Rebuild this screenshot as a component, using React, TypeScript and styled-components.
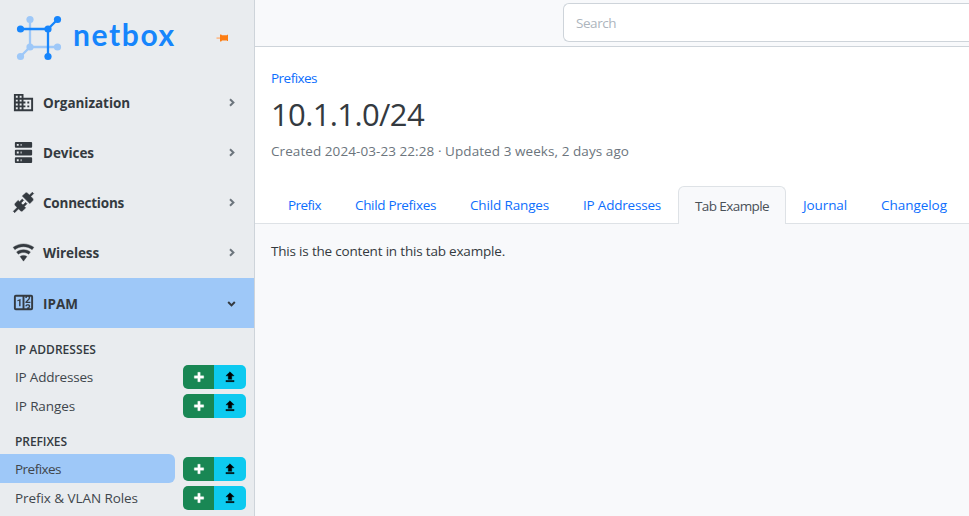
import React from "react";
import styled, { createGlobalStyle } from "styled-components";

const GlobalStyle = createGlobalStyle`
  * { box-sizing: border-box; }
  body {
    margin: 0;
    overflow: hidden;
    background: #f8f9fb;
    color: #343a40;
    font: 400 13.5px/20px "Open Sans", "Noto Sans", sans-serif;
  }
`;

const Page = styled.div`
  display: flex;
  height: 516px;
`;

const Sidebar = styled.aside`
  width: 255px;
  flex: none;
  background: #e9ecef;
  border-right: 1px solid #ced4da;
  overflow: hidden;
`;

const Brand = styled.div`
  height: 78px;
  padding: 12px 25px 0 14px;
  display: flex;
  align-items: flex-start;
`;

const BrandMark = styled.svg`
  width: 50px;
  height: 50px;
  flex: none;
`;

const BrandName = styled.span`
  flex: 1;
  margin: 2px 0 0 9px;
  color: #1685fc;
  font: 700 30px/40px Lato, sans-serif;
  letter-spacing: 1.6px;
`;

const Pin = styled.svg`
  width: 13px;
  height: 8px;
  margin-top: 22px;
`;

const NavItem = styled.a<{ $active?: boolean }>`
  display: flex;
  align-items: center;
  height: 50px;
  padding: 0 16px 0 12px;
  font-weight: 700;
  color: #343a40;
  background: ${(p) => (p.$active ? "#9ec8f8" : "transparent")};
`;

const NavIcon = styled.svg<{ $weight?: number }>`
  width: 23px;
  height: 23px;
  margin: -1px 8px 0 0;
  fill: #343a40;
  stroke: #343a40;
  stroke-width: ${(p) => p.$weight ?? 0};
`;

const Label = styled.span<{ $track?: number }>`
  white-space: nowrap;
  letter-spacing: ${(p) => p.$track ?? 0}px;
`;

const NavLabel = styled(Label)<{ $active?: boolean }>`
  flex: 1;
  margin-top: ${(p) => (p.$active ? 1 : -1)}px;
`;

const Chevron = styled.svg<{ $open?: boolean }>`
  width: 11px;
  height: 11px;
  margin: ${(p) => (p.$open ? "1px" : "-2px")} 1px 0 0;
  fill: none;
  stroke: ${(p) => (p.$open ? "#343a40" : "#6c757d")};
  stroke-width: 2;
  transform: ${(p) => (p.$open ? "rotate(90deg)" : "none")};
`;

const GroupTitle = styled.h6`
  height: 34px;
  margin: 0;
  padding: 12px 0 0 15px;
  font-size: 12px;
  font-weight: 600;
  line-height: 20px;
`;

const SubRow = styled.div`
  display: flex;
  align-items: center;
  height: 29px;
`;

const SubLink = styled.a<{ $active?: boolean }>`
  width: 175px;
  height: 29px;
  padding: 5px 0 0 15px;
  color: #40464c;
  border-radius: 0 6px 6px 0;
  background: ${(p) => (p.$active ? "#9ec8f8" : "transparent")};
`;

const ButtonGroup = styled.div`
  display: flex;
  margin: 1px 0 0 8px;
  height: 24px;
  border-radius: 5px;
  overflow: hidden;
`;

const IconButton = styled.button<{ $kind: "add" | "import" }>`
  display: flex;
  align-items: center;
  justify-content: center;
  width: ${(p) => (p.$kind === "add" ? 31 : 32)}px;
  padding: 0;
  border: 0;
  color: ${(p) => (p.$kind === "add" ? "#fff" : "#000")};
  background: ${(p) => (p.$kind === "add" ? "#198754" : "#0dcaf0")};
`;

const ButtonIcon = styled.svg`
  width: 14px;
  height: 14px;
  fill: currentColor;
  stroke: currentColor;
  stroke-width: 0.7;
`;

const Main = styled.main`
  flex: 1;
  min-width: 0;
`;

const TopBar = styled.header`
  height: 47px;
  padding: 3px 0 0 308px;
  background: #f8f9fb;
  border-bottom: 1px solid #ced4da;
`;

const SearchBox = styled.div`
  height: 39px;
  padding: 10px 12px;
  color: #adb5bd;
  background: #fff;
  border: 1px solid #ced4da;
  border-right: 0;
  border-radius: 6px 0 0 6px;
  line-height: 18px;
`;

const PageHead = styled.section`
  height: 177px;
  padding: 21px 0 0 16px;
  display: flex;
  flex-direction: column;
  background: #fff;
`;

const Crumb = styled(Label)`
  color: #0d6efd;
`;

const Title = styled.h1`
  margin: 6px 0 7px;
  font-size: 31px;
  font-weight: 400;
  line-height: 40px;
  letter-spacing: -0.62px;
`;

const Meta = styled(Label)`
  color: #6c757d;
`;

const TabBar = styled.nav`
  display: flex;
  flex: none;
  height: 38px;
  margin-top: auto;
  margin-left: -16px;
  padding-left: 16px;
  box-shadow: inset 0 -1px #dee2e6;
`;

const Tab = styled.a<{ $active?: boolean; $width: number }>`
  width: ${(p) => p.$width}px;
  padding: ${(p) => (p.$active ? 9 : 8)}px 16px 0;
  border: 1px solid ${(p) => (p.$active ? "#dee2e6" : "transparent")};
  border-bottom: 0;
  border-radius: 6px 6px 0 0;
  color: ${(p) => (p.$active ? "#495057" : "#0d6efd")};
  background: ${(p) => (p.$active ? "#f8f9fb" : "transparent")};
`;

const Content = styled.section`
  padding: 17px 16px;
`;

const icons = {
  domain:
    "M18,15H16V17H18M18,11H16V13H18M20,19H12V17H14V15H12V13H14V11H12V9H20M10,7H8V5H10M10,11H8V9H10M10,15H8V13H10M10,19H8V17H10M6,7H4V5H6M6,11H4V9H6M6,15H4V13H6M6,19H4V17H6M12,7V3H2V21H22V7H12Z",
  server:
    "M4,1H20A1,1 0 0,1 21,2V6A1,1 0 0,1 20,7H4A1,1 0 0,1 3,6V2A1,1 0 0,1 4,1M4,9H20A1,1 0 0,1 21,10V14A1,1 0 0,1 20,15H4A1,1 0 0,1 3,14V10A1,1 0 0,1 4,9M4,17H20A1,1 0 0,1 21,18V22A1,1 0 0,1 20,23H4A1,1 0 0,1 3,22V18A1,1 0 0,1 4,17M9,5H10V3H9V5M9,13H10V11H9V13M9,21H10V19H9V21M5,3V5H7V3H5M5,11V13H7V11H5M5,19V21H7V19H5Z",
  connection:
    "M21.4 7.5C22.2 8.3 22.2 9.6 21.4 10.3L18.6 13.1L10.8 5.3L13.6 2.5C14.4 1.7 15.7 1.7 16.4 2.5L18.2 4.3L21.2 1.3L22.6 2.7L19.6 5.7L21.4 7.5M15.6 13.3L14.2 11.9L11.4 14.7L9.3 12.6L12.1 9.8L10.7 8.4L7.9 11.2L6.4 9.8L3.6 12.6C2.8 13.4 2.8 14.7 3.6 15.4L5.4 17.2L1.4 21.2L2.8 22.6L6.8 18.6L8.6 20.4C9.4 21.2 10.7 21.2 11.4 20.4L14.2 17.6L12.8 16.2L15.6 13.3Z",
  wifi:
    "M12,21L15.6,16.2C14.6,15.45 13.35,15 12,15C10.65,15 9.4,15.45 8.4,16.2L12,21M12,3C7.95,3 4.21,4.34 1.2,6.6L3,9C5.5,7.12 8.62,6 12,6C15.38,6 18.5,7.12 21,9L22.8,6.6C19.79,4.34 16.05,3 12,3M12,9C9.3,9 6.81,9.89 4.8,11.4L6.6,13.8C8.1,12.67 9.97,12 12,12C14.03,12 15.9,12.67 17.4,13.8L19.2,11.4C17.19,9.89 14.7,9 12,9Z",
  counter:
    "M4,4H20A2,2 0 0,1 22,6V18A2,2 0 0,1 20,20H4A2,2 0 0,1 2,18V6A2,2 0 0,1 4,4M4,6V18H11V6H4M20,18V6H18.76C19,6.54 18.95,7.07 18.95,7.13C18.88,7.8 18.41,8.5 18.24,8.75L15.91,11.3L19.23,11.28L19.24,12.5L14.04,12.47L14,11.47C14,11.47 17.05,8.24 17.2,7.95C17.34,7.67 17.91,6 16.5,6C15.27,6.05 15.41,7.3 15.41,7.3L13.87,7.31C13.87,7.31 13.88,6.65 14.25,6H13V18H15.58L15.57,17.14L16.54,17.13C16.54,17.13 17.45,16.97 17.46,16.08C17.5,15.08 16.65,15.08 16.5,15.08C16.37,15.08 15.43,15.13 15.43,15.95H13.91C13.91,15.95 13.95,13.89 16.5,13.89C19.1,13.89 18.96,15.91 18.96,15.91C18.96,15.91 19,17.16 17.85,17.63L18.37,18H20M8.92,16H7.42V10.2L5.62,10.76V9.53L8.76,8.41H8.92V16Z",
  plus: "M20 14H14V20H10V14H4V10H10V4H14V10H20V14Z",
  upload: "M9,16V10H5L12,3L19,10H15V16H9M5,20V18H19V20H5Z",
};

const navItems = [
  { label: "Organization", icon: icons.domain, track: -0.04 },
  { label: "Devices", icon: icons.server, track: -0.06 },
  { label: "Connections", icon: icons.connection, track: -0.23, weight: 0.6 },
  { label: "Wireless", icon: icons.wifi, track: -0.1, weight: 0.4 },
  { label: "IPAM", icon: icons.counter, track: 0, open: true },
];

const groups = [
  {
    title: "IP ADDRESSES",
    track: 0.04,
    links: [
      { label: "IP Addresses", track: -0.2 },
      { label: "IP Ranges", track: -0.09 },
    ],
  },
  {
    title: "PREFIXES",
    track: -0.07,
    links: [
      { label: "Prefixes", track: -0.53, active: true },
      { label: "Prefix & VLAN Roles", track: -0.07 },
    ],
  },
];

const tabs = [
  { label: "Prefix", width: 67, track: -0.54 },
  { label: "Child Prefixes", width: 115, track: -0.33 },
  { label: "Child Ranges", width: 113, track: -0.15 },
  { label: "IP Addresses", width: 112, track: -0.2 },
  { label: "Tab Example", width: 108, track: -0.59, active: true },
  { label: "Journal", width: 78, track: -0.1 },
  { label: "Changelog", width: 100, track: -0.04 },
];

function Logo() {
  return (
    <BrandMark viewBox="14 12 50 50" fill="none" strokeWidth="2.3">
      <g stroke="#9ec8f8" fill="#9ec8f8">
        <path d="M30 19.5V47H57.5M30 47L20.5 56.5" fill="none" />
        <g stroke="none">
          <circle cx="30" cy="19.5" r="3.6" />
          <circle cx="57.5" cy="47" r="3.6" />
          <circle cx="30" cy="47" r="3.6" />
          <circle cx="20.5" cy="56.5" r="3.6" />
        </g>
      </g>
      <g stroke="#1685fc" fill="#1685fc">
        <path d="M20.5 29H48V56.5M48 29L57.5 19.5" fill="none" />
        <g stroke="none">
          <circle cx="20.5" cy="29" r="3.6" />
          <circle cx="48" cy="29" r="3.6" />
          <circle cx="57.5" cy="19.5" r="3.6" />
          <circle cx="48" cy="56.5" r="3.6" />
        </g>
      </g>
    </BrandMark>
  );
}

export default function App() {
  return (
    <>
      <GlobalStyle />
      <Page>
        <Sidebar>
          <Brand>
            <Logo />
            <BrandName>netbox</BrandName>
            <Pin viewBox="0 0 13 8">
              <path d="M0.5 3.4H4V4.8H0.5Z" fill="#fdb37a" />
              <path d="M4 0.6H5.2L6 1.3H11V0.8H12V7H11V6.5H6L5.2 7.4H4Z" fill="#fd7e14" />
            </Pin>
          </Brand>
          {navItems.map((n) => (
            <NavItem key={n.label} $active={n.open}>
              <NavIcon viewBox="0 0 24 24" $weight={n.weight}>
                <path d={n.icon} />
              </NavIcon>
              <NavLabel $track={n.track} $active={n.open}>
                {n.label}
              </NavLabel>
              <Chevron viewBox="0 0 11 11" $open={n.open}>
                <path d="M4 2.2L7.4 5.5L4 8.8" />
              </Chevron>
            </NavItem>
          ))}
          {groups.map((g) => (
            <React.Fragment key={g.title}>
              <GroupTitle>
                <Label $track={g.track}>{g.title}</Label>
              </GroupTitle>
              {g.links.map((l) => (
                <SubRow key={l.label}>
                  <SubLink $active={"active" in l}>
                    <Label $track={l.track}>{l.label}</Label>
                  </SubLink>
                  <ButtonGroup>
                    <IconButton $kind="add" aria-label="Add">
                      <ButtonIcon viewBox="0 0 24 24">
                        <path d={icons.plus} />
                      </ButtonIcon>
                    </IconButton>
                    <IconButton $kind="import" aria-label="Import">
                      <ButtonIcon viewBox="0 0 24 24">
                        <path d={icons.upload} />
                      </ButtonIcon>
                    </IconButton>
                  </ButtonGroup>
                </SubRow>
              ))}
            </React.Fragment>
          ))}
        </Sidebar>
        <Main>
          <TopBar>
            <SearchBox>
              <Label $track={-0.45}>Search</Label>
            </SearchBox>
          </TopBar>
          <PageHead>
            <Crumb $track={-0.53}>Prefixes</Crumb>
            <Title>10.1.1.0/24</Title>
            <Meta $track={0.07}>Created 2024-03-23 22:28 · Updated 3 weeks, 2 days ago</Meta>
            <TabBar>
              {tabs.map((t) => (
                <Tab key={t.label} $active={t.active} $width={t.width}>
                  <Label $track={t.track}>{t.label}</Label>
                </Tab>
              ))}
            </TabBar>
          </PageHead>
          <Content>
            <Label $track={-0.19}>This is the content in this tab example.</Label>
          </Content>
        </Main>
      </Page>
    </>
  );
}
